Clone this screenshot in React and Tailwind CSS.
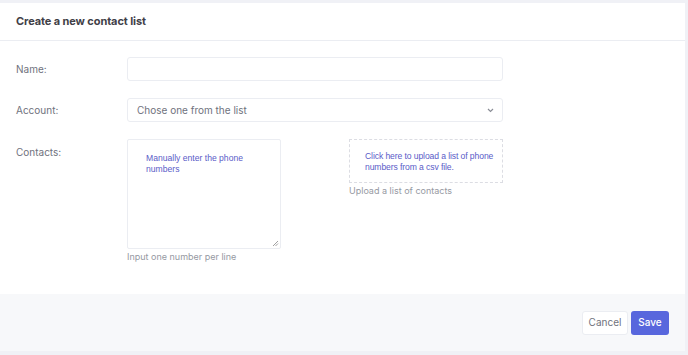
export default function App() {
  const sans = { fontFamily: "Inter, 'Open Sans', sans-serif" };
  const arial = { fontFamily: "'Liberation Sans', Arial, sans-serif" };
  return (
    <div className="w-[688px] h-[355px] bg-[#f0f1f6] pt-[3px] pr-[3px] overflow-hidden" style={sans}>
      <div className="bg-white h-[348px] flex flex-col">
        <div className="h-[38px] px-4 flex items-center border-b border-[#ebedf2]">
          <h1 className="text-[11px] font-bold text-[#3f4047] tracking-[-0.1px]">Create a new contact list</h1>
        </div>
        <div className="flex-1 pt-4 pl-4">
          <div className="flex flex-col gap-[17px]">
            <div className="flex items-center">
              <label className="w-[111px] text-[10px] text-[#6f727d]">Name:</label>
              <input className="w-[376px] h-[24px] border border-[#ebedf2] rounded-[3px] outline-none" />
            </div>
            <div className="flex items-center">
              <label className="w-[111px] text-[10px] text-[#6f727d]">Account:</label>
              <div className="w-[376px] h-[24px] border border-[#ebedf2] rounded-[3px] flex items-center justify-between pl-[9px] pr-[8px]">
                <span className="text-[10px] text-[#6f727d]">Chose one from the list</span>
                <svg width="7" height="5" viewBox="0 0 7 5" className="text-[#8a8d96]">
                  <path d="M1 1 L3.5 3.5 L6 1" fill="none" stroke="currentColor" strokeWidth="1.2" />
                </svg>
              </div>
            </div>
            <div className="flex items-start">
              <label className="w-[111px] text-[10px] text-[#6f727d] pt-[6px]">Contacts:</label>
              <div className="w-[154px]">
                <div className="relative h-[110px] border border-[#ebedf2] rounded-[2px] pl-[18px] pr-[20px] pt-[13px]">
                  <p className="text-[8.6px] leading-[11px] text-[#5a5cc8]" style={arial}>
                    Manually enter the phone<br />numbers
                  </p>
                  <svg width="7" height="7" viewBox="0 0 7 7" className="absolute right-[1px] bottom-[1px]">
                    <path d="M6 1 L1 6 M6 3.5 L3.5 6" stroke="#888" strokeWidth="0.8" />
                  </svg>
                </div>
                <p className="text-[9px] text-[#9699a2] mt-[1px] whitespace-nowrap">Input one number per line</p>
              </div>
              <div className="ml-[68px] w-[154px]">
                <div className="h-[44px] border border-dashed border-[#dcdde3] pl-[15px] pt-[11px]">
                  <p className="text-[8.6px] leading-[10.5px] text-[#5a5cc8] whitespace-nowrap tracking-[-0.1px]" style={arial}>
                    Click here to upload a list of phone<br />numbers from a csv file.
                  </p>
                </div>
                <p className="text-[9px] text-[#9699a2] mt-[1px] whitespace-nowrap">Upload a list of contacts</p>
              </div>
            </div>
          </div>
        </div>
        <div className="h-[57px] bg-[#f7f8fa] flex items-center justify-end gap-[3px] pr-4">
          <button className="h-[24px] w-[46px] border border-[#ebedf2] bg-white rounded-[3px] text-[10px] text-[#6f727d]">Cancel</button>
          <button className="h-[24px] w-[38px] bg-[#5867dd] rounded-[3px] text-[10px] font-medium text-white">Save</button>
        </div>
      </div>
    </div>
  );
}
